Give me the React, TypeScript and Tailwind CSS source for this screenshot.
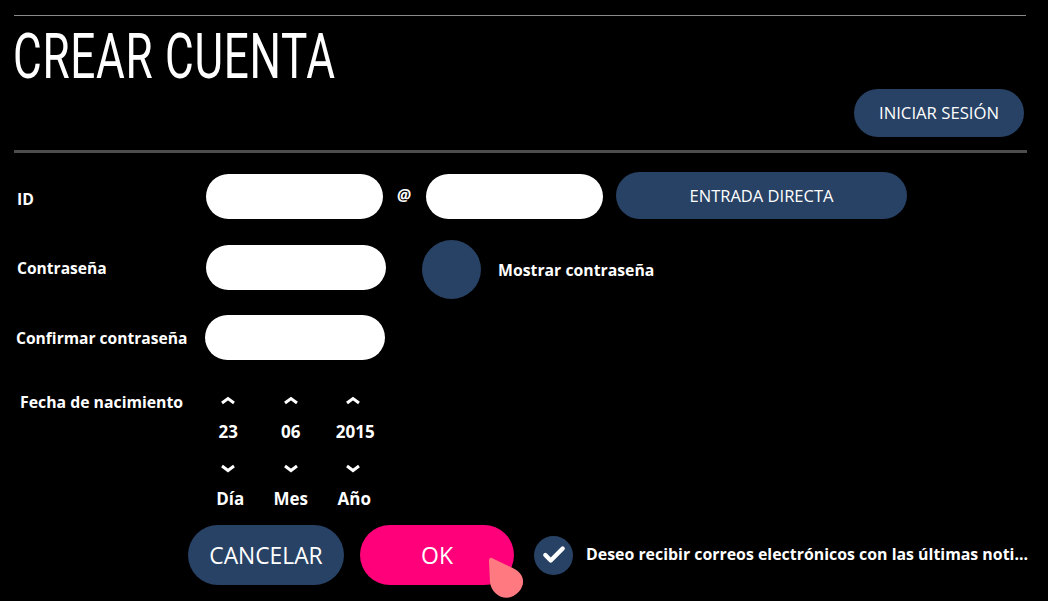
import { Check } from "lucide-react"

function Spinner({ value, label, valueShift, labelShift }: { value: string; label: string; valueShift: string; labelShift: string }) {
  return (
    <div className="w-[62.5px] flex flex-col items-center text-[17px] font-bold text-white">
      <svg className="w-[16px] h-[18px] mt-[1px]" viewBox="0 0 16 18" fill="none" stroke="currentColor" strokeWidth={3}>
        <path d="M2 12 L8 7.5 L14 12" />
      </svg>
      <div className={`h-[24px] mt-[11px] leading-[24px] ${valueShift}`}>{value}</div>
      <svg className="w-[16px] h-[18px] mt-[16px]" viewBox="0 0 16 18" fill="none" stroke="currentColor" strokeWidth={3}>
        <path d="M2 6 L8 10.5 L14 6" />
      </svg>
      <div className={`h-[24px] mt-[9px] leading-[24px] ${labelShift}`}>{label}</div>
    </div>
  )
}

function App() {
  return (
    <div className="w-[1048px] h-[601px] bg-black overflow-hidden font-['Open_Sans',sans-serif] text-white">
      <div className="pt-[15px] pl-[14px] pr-[22px]">
        <div className="h-px bg-[#8a8a8a]" />
        <h1 className="h-[70px] -ml-[1px] font-['Roboto',sans-serif] font-normal text-[63px] leading-[74px] tracking-[1px] mt-[4px] origin-left scale-x-[0.70] whitespace-nowrap">
          CREAR CUENTA
        </h1>
        <div className="flex justify-end pr-[2px] -mt-[1px]">
          <button className="w-[170px] h-[48px] rounded-full bg-[#284265] text-[16.7px] text-white">INICIAR SESIÓN</button>
        </div>
        <div className="h-[3px] bg-[#4d4d4d] mt-[13px] -mr-[1px]" />
      </div>

      <div className="flex items-start mt-[19px]">
        <div className="w-[206px] pl-[17px] pt-[16px] text-[15.8px] font-bold">ID</div>
        <div className="w-[177px] h-[45px] mt-[2px] rounded-full bg-white" />
        <div className="w-[43px] pl-[14px] pt-[11px] text-[16px] font-bold italic">@</div>
        <div className="w-[177px] h-[45px] mt-[2px] rounded-full bg-white" />
        <button className="w-[291px] h-[47px] ml-[13px] pt-[1px] rounded-full bg-[#284265] text-[16.5px]">ENTRADA DIRECTA</button>
      </div>

      <div className="flex items-center mt-[21px] h-[59px]">
        <div className="w-[206px] pl-[17px] pb-[2px] text-[15.6px] font-bold">Contraseña</div>
        <div className="w-[180px] h-[45px] mb-[4px] rounded-full bg-white" />
        <div className="w-[59px] h-[59px] ml-[36px] rounded-full bg-[#284265]" />
        <div className="ml-[17px] pt-[2px] text-[15.8px] font-bold">Mostrar contraseña</div>
      </div>

      <div className="flex items-center mt-[16px] h-[45px]">
        <div className="w-[205px] pl-[16px] pt-[2px] text-[15.6px] font-bold whitespace-nowrap">Confirmar contraseña</div>
        <div className="w-[180px] h-[45px] rounded-full bg-white" />
      </div>

      <div className="flex items-start mt-[30px]">
        <div className="w-[197px] pl-[20px] text-[15.8px] font-bold leading-[24px] whitespace-nowrap">Fecha de nacimiento</div>
        <Spinner value="23" label="Día" valueShift="" labelShift="translate-x-[2px]" />
        <Spinner value="06" label="Mes" valueShift="" labelShift="" />
        <Spinner value="2015" label="Año" valueShift="translate-x-[2px]" labelShift="translate-x-[1px]" />
      </div>

      <div className="flex items-center mt-[14px] pl-[188px]">
        <button className="w-[156px] h-[60px] pt-[2px] rounded-full bg-[#284265] text-[22.8px]">CANCELAR</button>
        <button className="relative w-[154px] h-[60px] ml-[16px] rounded-full bg-[#ff007a] text-[23px]">
          OK
          <svg className="absolute left-[129px] top-[30px] w-[36px] h-[44px]" viewBox="0 0 38 46">
            <path d="M3 3 C1 2 0 4 0 6 L1 28 C2 38 10 45 19 45 C28 44 36 36 36 28 C36 21 31 16 24 13 Z" fill="#ff7a80" />
          </svg>
        </button>
        <div className="w-[39px] h-[39px] ml-[20px] rounded-full bg-[#284265] flex items-center justify-center">
          <Check className="w-[26px] h-[26px]" strokeWidth={4} />
        </div>
        <div className="ml-[13px] text-[15.9px] font-bold whitespace-nowrap">Deseo recibir correos electrónicos con las últimas noti...</div>
      </div>
    </div>
  )
}

export default App
